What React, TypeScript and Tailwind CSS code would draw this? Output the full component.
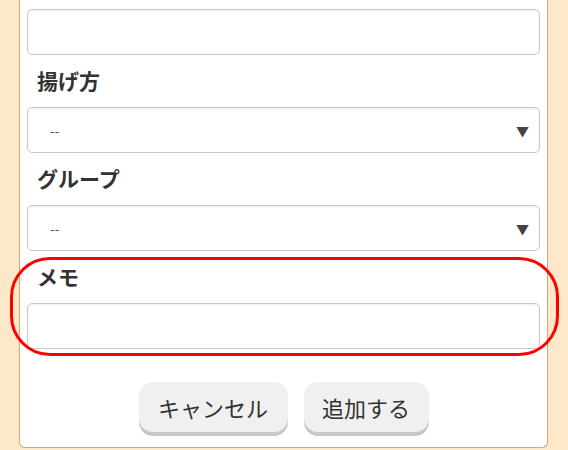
import React from "react";

const font = { fontFamily: '"Noto Sans CJK JP", "Noto Sans", sans-serif' };

const Label = ({ children }: { children: React.ReactNode }) => (
  <div className="h-[52px] flex items-center pl-[10px] text-[21px] font-bold text-[#333]">
    {children}
  </div>
);

const TextInput = () => (
  <input
    type="text"
    className="block w-full h-[46px] rounded-[5px] border border-[#c8c8c8] bg-white shadow-[inset_0_1px_2px_rgba(0,0,0,0.08)] outline-none"
  />
);

const Select = () => (
  <div className="relative h-[46px] rounded-[5px] border border-[#c8c8c8] bg-white shadow-[inset_0_1px_2px_rgba(0,0,0,0.08)] flex items-center">
    <span className="pl-[22px] text-[14px] text-[#555]">--</span>
    <span className="absolute right-[10px] top-[13px] text-[13px] text-[#444]">▼</span>
  </div>
);

export default function App() {
  return (
    <div className="w-[568px] h-[450px] overflow-hidden bg-[#fde9c9] pl-[19px] pr-[20px]" style={font}>
      <div className="relative bg-white border-x border-b border-[#d8a473] rounded-b-[6px] px-[7px] pt-[9px] pb-[11px]">
        <TextInput />
        <Label>揚げ方</Label>
        <Select />
        <Label>グループ</Label>
        <Select />
        <Label>メモ</Label>
        <TextInput />
        <div className="flex justify-center gap-[16px] mt-[33px]">
          <button className="w-[149px] h-[50px] rounded-[14px] bg-[#f0f0f0] text-[22px] text-[#333] shadow-[0_4px_0_#c8c8c8] mb-[4px]">
            キャンセル
          </button>
          <button className="w-[125px] h-[50px] rounded-[14px] bg-[#f0f0f0] text-[22px] text-[#333] shadow-[0_4px_0_#c8c8c8] mb-[4px]">
            追加する
          </button>
        </div>
        <div className="absolute left-[-10px] top-[257px] w-[549px] h-[99px] rounded-[40px] border-[3px] border-[#f00] pointer-events-none" />
      </div>
    </div>
  );
}
